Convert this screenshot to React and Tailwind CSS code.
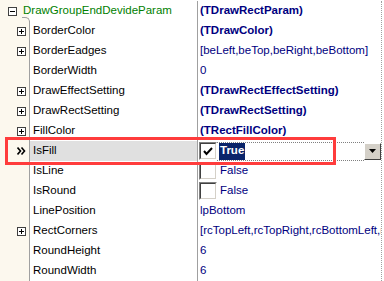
import React from "react";

const PlusBox = ({ minus }) => (
  <svg width="9" height="9" viewBox="0 0 9 9" className="block">
    <rect x="0.5" y="0.5" width="8" height="8" fill="#ffffff" stroke="#404040" />
    <line x1="2" y1="4.5" x2="7" y2="4.5" stroke="#000" />
    {!minus && <line x1="4.5" y1="2" x2="4.5" y2="7" stroke="#000" />}
  </svg>
);

const Chevrons = () => (
  <svg width="9" height="8" viewBox="0 0 9 8" className="block">
    <path d="M0.5 0.5 L3.5 4 L0.5 7.5 M4.5 0.5 L7.5 4 L4.5 7.5" fill="none" stroke="#000" strokeWidth="1.6" />
  </svg>
);

const CheckBox = ({ checked }) => (
  <div className="w-[18px] h-[18px] border border-t-[#808080] border-l-[#808080] border-r-[#ffffff] border-b-[#ffffff]">
    <div className="w-full h-full border border-t-[#404040] border-l-[#404040] border-r-[#d4d0c8] border-b-[#d4d0c8] bg-white flex items-center justify-center">
      {checked && (
        <svg width="10" height="9" viewBox="0 0 10 9" className="block">
          <path d="M1 4 L3.5 7 L9 1" fill="none" stroke="#000" strokeWidth="2" />
        </svg>
      )}
    </div>
  </div>
);

const rows = [
  { name: "BorderColor", plus: true, value: "(TDrawColor)", bold: true },
  { name: "BorderEadges", plus: true, value: "[beLeft,beTop,beRight,beBottom]" },
  { name: "BorderWidth", value: "0" },
  { name: "DrawEffectSetting", plus: true, value: "(TDrawRectEffectSetting)", bold: true },
  { name: "DrawRectSetting", plus: true, value: "(TDrawRectSetting)", bold: true },
  { name: "FillColor", plus: true, value: "(TRectFillColor)", bold: true },
  { name: "IsFill", selected: true, check: true },
  { name: "IsLine", check: false, value: "False" },
  { name: "IsRound", check: false, value: "False" },
  { name: "LinePosition", value: "lpBottom" },
  { name: "RectCorners", plus: true, value: "[rcTopLeft,rcTopRight,rcBottomLeft,rcBottomRight]" },
  { name: "RoundHeight", value: "6" },
  { name: "RoundWidth", value: "6" },
];

export default function App() {
  return (
    <div
      className="relative w-[384px] h-[281px] overflow-hidden bg-[linear-gradient(to_right,#fcf8ee_29px,#ffffff_29px)] pt-[1px] text-[11.5px] leading-none"
      style={{ fontFamily: '"Liberation Sans", Arial, sans-serif' }}
    >
      <div className="w-[382px] border-r border-dotted border-[#a0a0a0]">
        {/* category row */}
        <div className="relative flex h-[20px]">
          <div className="w-[197px] flex items-center pl-[8px]">
            <PlusBox minus />
            <span className="ml-[6px] text-[#008000] whitespace-nowrap">DrawGroupEndDevideParam</span>
          </div>
          <div className="flex-1 flex items-center border-l border-[#a0a0a0] pl-[2px] text-[#000080] font-bold whitespace-nowrap">
            (TDrawRectParam)
          </div>
          <div className="absolute left-[22px] top-[16px] w-[8px] h-[5px] border-t border-r border-[#a0a0a0] rounded-tr-[5px]" />
        </div>

        {rows.map((r) => (
          <div key={r.name} className="flex h-[20px]">
            <div className="w-[29px] flex items-center">
              {r.plus && (
                <div className="ml-[17px]">
                  <PlusBox />
                </div>
              )}
              {r.selected && (
                <div className="ml-[17px]">
                  <Chevrons />
                </div>
              )}
            </div>
            <div
              className={`w-[168px] flex items-center border-l border-[#a0a0a0] pl-[3px] text-black whitespace-nowrap ${
                r.selected ? "bg-[#e0e0e0]" : ""
              }`}
            >
              {r.name}
            </div>
            <div className="flex-1 min-w-0 flex items-center border-l border-[#a0a0a0] pl-[2px] text-[#000080] whitespace-nowrap overflow-hidden">
              {r.selected ? (
                <div className="flex items-center w-full">
                  <div className="-ml-[1px]">
                    <CheckBox checked />
                  </div>
                  <div className="flex-1 h-[19px] flex items-center border-t border-b border-dotted border-[#808080]">
                    <span className="ml-[2px] bg-[#0a246a] text-white font-bold h-[17px] px-[1px] flex items-center">
                      True
                    </span>
                  </div>
                  <div className="w-[17px] h-[17px] bg-[#d4d0c8] border border-t-[#ffffff] border-l-[#ffffff] border-r-[#404040] border-b-[#404040] flex items-center justify-center">
                    <svg width="7" height="4" viewBox="0 0 7 4" className="block">
                      <path d="M0 0 H7 L3.5 4 Z" fill="#000" />
                    </svg>
                  </div>
                </div>
              ) : r.check === false ? (
                <div className="flex items-center">
                  <div className="-ml-[1px]">
                    <CheckBox />
                  </div>
                  <span className="ml-[3px]">{r.value}</span>
                </div>
              ) : (
                <span className={r.bold ? "font-bold" : ""}>{r.value}</span>
              )}
            </div>
          </div>
        ))}
      </div>

      <div className="absolute left-[5px] top-[137px] w-[331px] h-[28px] border-[3px] border-[#ff3c3c]" />
    </div>
  );
}
